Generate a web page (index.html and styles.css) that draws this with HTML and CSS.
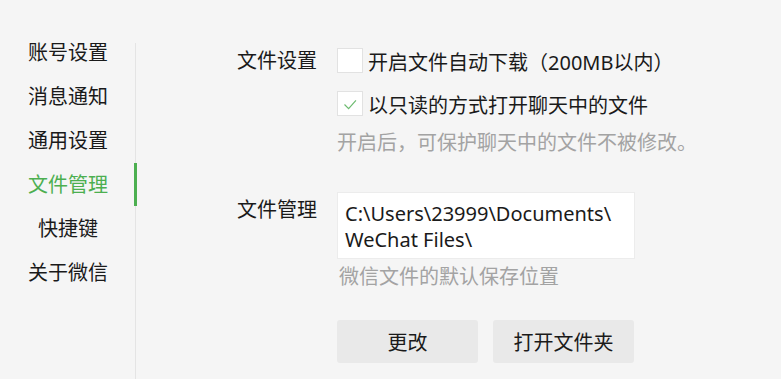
FILE: index.html
```html
<!DOCTYPE html>
<html lang="zh-CN">
<head>
  <meta charset="UTF-8">
  <title>文件管理</title>
  <link rel="stylesheet" href="styles.css">
</head>
<body>
  <div class="settings">
    <nav class="sidebar">
      <div class="nav-item">账号设置</div>
      <div class="nav-item">消息通知</div>
      <div class="nav-item">通用设置</div>
      <div class="nav-item active">文件管理</div>
      <div class="nav-item">快捷键</div>
      <div class="nav-item">关于微信</div>
    </nav>

    <main class="content">
      <section class="group group-files">
        <div class="label">文件设置</div>
        <div class="options">
          <div class="option">
            <span class="checkbox"></span>
            <span class="option-text">开启文件自动下载（200MB以内）</span>
          </div>
          <div class="option">
            <span class="checkbox checked">
              <svg viewBox="0 0 24 24"><polyline points="6,12.5 10.5,17 18.5,8"></polyline></svg>
            </span>
            <span class="option-text">以只读的方式打开聊天中的文件</span>
          </div>
          <div class="hint hint-readonly">开启后，可保护聊天中的文件不被修改。</div>
        </div>
      </section>

      <section class="group group-path">
        <div class="label label-path">文件管理</div>
        <div class="options">
          <div class="path-box">C:\Users\23999\Documents\<br>WeChat Files\</div>
          <div class="hint hint-path">微信文件的默认保存位置</div>
          <div class="buttons">
            <button class="btn">更改</button>
            <button class="btn">打开文件夹</button>
          </div>
        </div>
      </section>
    </main>
  </div>
</body>
</html>
```

FILE: styles.css
```css
html, body {
  margin: 0;
  padding: 0;
  height: 100%;
  background-color: #f5f5f5;
  font-family: "Noto Sans", "Noto Sans CJK SC", sans-serif;
  color: #1a1a1a;
  overflow: hidden;
}

.settings {
  display: flex;
  height: 100%;
}

/* left menu */
.sidebar {
  position: relative;
  width: 136px;
  flex-shrink: 0;
  padding-top: 31px;
  box-sizing: border-box;
}

.sidebar::before {
  content: "";
  position: absolute;
  top: 43px;
  bottom: 0;
  right: 0;
  width: 1px;
  background-color: #e4e4e4;
}

.nav-item {
  position: relative;
  height: 44px;
  line-height: 44px;
  text-align: center;
  font-size: 20px;
}

.nav-item.active {
  color: #4caf50;
}

.nav-item.active::after {
  content: "";
  position: absolute;
  top: 0;
  bottom: 1px;
  right: -1px;
  width: 3px;
  background-color: #4caf50;
}

/* right panel */
.content {
  padding: 48px 0 0 101px;
  flex: 1;
}

.group {
  display: flex;
}

.label {
  width: 100px;
  flex-shrink: 0;
  font-size: 20px;
  line-height: 26px;
}

.options {
  display: flex;
  flex-direction: column;
}

.option {
  display: flex;
  align-items: center;
  height: 25px;
  gap: 5px;
  font-size: 20px;
}

.option + .option {
  margin-top: 18px;
}

.option-text {
  line-height: 25px;
  padding-top: 3px;
}

.checkbox {
  width: 24px;
  height: 23px;
  border: 1px solid #e2e2e2;
  background-color: #fff;
  display: flex;
  align-items: center;
  justify-content: center;
}

.checkbox svg {
  width: 22px;
  height: 22px;
  fill: none;
  stroke: #6dbb70;
  stroke-width: 1.3;
}

.hint {
  font-size: 20px;
  line-height: 20px;
  color: #a3a3a3;
}

.hint-readonly {
  margin-top: 17px;
}

.group-path {
  margin-top: 39px;
}

.label-path {
  margin-top: 5px;
}

.path-box {
  width: 298px;
  height: 67px;
  box-sizing: border-box;
  padding: 8px 7px 0;
  background-color: #fff;
  border: 1px solid #ececec;
  font-size: 20px;
  line-height: 26px;
}

.hint-path {
  margin-top: 8px;
  padding-left: 2px;
}

.buttons {
  display: flex;
  gap: 15px;
  margin-top: 33px;
}

.btn {
  width: 141px;
  height: 43px;
  border: none;
  border-radius: 3px;
  background-color: #e9e9e9;
  font-family: inherit;
  font-size: 20px;
  color: #1a1a1a;
  padding: 0;
}
```
